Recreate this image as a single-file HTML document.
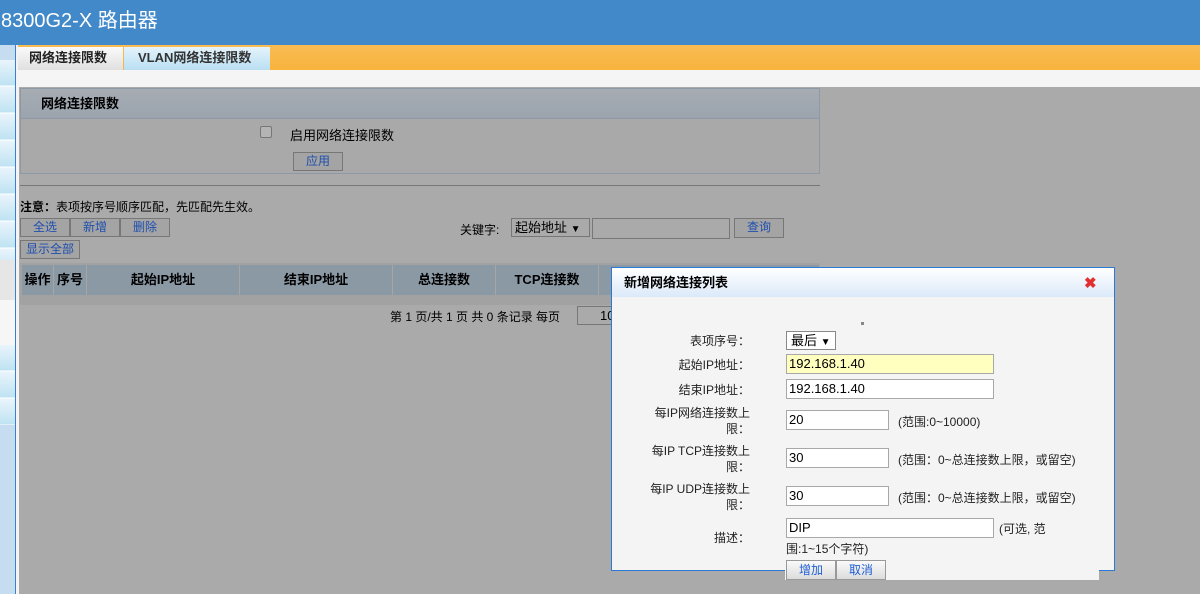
<!DOCTYPE html>
<html><head><meta charset="utf-8"><style>
*{margin:0;padding:0;box-sizing:border-box}
body{width:1200px;height:594px;position:relative;overflow:hidden;background:#aaa;font-family:"Liberation Sans","Noto Sans CJK SC",sans-serif;font-size:12px;color:#000}
.a{position:absolute}
.btn{position:absolute;border:1px solid #777;background:#a4a4a4;color:#1f4fae;text-align:center;line-height:17px;font-size:12px}
.dbtn{position:absolute;border:1px solid #999;background:linear-gradient(#fafafa,#dcdcdc);color:#1f5fd6;text-align:center;line-height:18px;font-size:12px}
.inp{position:absolute;border:1px solid #a8a8a8;background:#fff;height:20px;padding-left:2px;line-height:18px;font-size:13px}
.lb{position:absolute;right:450px;text-align:right;width:140px;line-height:16px;font-size:12px;color:#222}
.th{position:absolute;top:265px;height:30px;line-height:30px;text-align:center;font-weight:bold;font-size:13px;background:#8b99a5;border-right:1px solid #a6a6a6}
</style></head><body>
<div class="a" style="left:0;top:0;width:1200px;height:45px;background:#4289c9;color:#fff;font-size:20px;line-height:42px;padding-left:1px">8300G2-X 路由器</div>
<div class="a" style="left:0;top:45px;width:15px;height:549px;background:#c6dcf0"></div>
<div class="a" style="left:0;top:60px;width:15px;height:200px;background:repeating-linear-gradient(#e9f4fb 0,#bfe3f3 25px,#fff 26px,#e9f4fb 27px)"></div>
<div class="a" style="left:0;top:260px;width:15px;height:40px;background:#e6e6e6"></div>
<div class="a" style="left:0;top:300px;width:15px;height:45px;background:#f6f6f6"></div>
<div class="a" style="left:0;top:345px;width:15px;height:80px;background:repeating-linear-gradient(#e9f4fb 0,#bfe3f3 25px,#fff 26px,#e9f4fb 27px)"></div>
<div class="a" style="left:15px;top:45px;width:1px;height:549px;background:#3b7fd0"></div>
<div class="a" style="left:16px;top:45px;width:3px;height:549px;background:#f4f4f4"></div>
<div class="a" style="left:18px;top:45px;width:1182px;height:25px;background:linear-gradient(#f9bc53,#f8b33d)"></div>
<div class="a" style="left:18px;top:70px;width:1182px;height:17px;background:#f5f5f5"></div>
<div class="a" style="left:18px;top:47px;width:105px;height:23px;background:linear-gradient(#fafafa,#e0e0e0);font-weight:bold;font-size:13px;line-height:22px;padding-left:11px;color:#222">网络连接限数</div>
<div class="a" style="left:124px;top:47px;width:146px;height:23px;background:linear-gradient(#e4f3fb,#b9dff2);font-weight:bold;font-size:13px;line-height:22px;padding-left:14px;color:#333">VLAN网络连接限数</div>

<div class="a" style="left:20px;top:88px;width:800px;height:86px;border:1px solid #8d9aa6;background:#a9a9a9"></div>
<div class="a" style="left:21px;top:89px;width:798px;height:30px;background:linear-gradient(#a7acb3,#9ba4ae);border-bottom:1px solid #8d9aa6;font-weight:bold;font-size:13px;line-height:30px;padding-left:20px">网络连接限数</div>
<div class="a" style="left:260px;top:126px;width:12px;height:12px;border:1px solid #777;border-radius:2px;background:#b4b4b4"></div>
<div class="a" style="left:290px;top:125px;font-size:13px">启用网络连接限数</div>
<div class="btn" style="left:293px;top:152px;width:50px;height:19px">应用</div>
<div class="a" style="left:20px;top:185px;width:800px;height:1px;background:#777"></div>
<div class="a" style="left:20px;top:198px;font-size:12px"><b>注意：</b>表项按序号顺序匹配，先匹配先生效。</div>
<div class="btn" style="left:20px;top:218px;width:50px;height:19px">全选</div>
<div class="btn" style="left:70px;top:218px;width:50px;height:19px">新增</div>
<div class="btn" style="left:120px;top:218px;width:50px;height:19px">删除</div>
<div class="btn" style="left:20px;top:240px;width:60px;height:19px">显示全部</div>
<div class="a" style="left:460px;top:221px">关键字:</div>
<div class="a" style="left:511px;top:218px;width:79px;height:19px;border:1px solid #777;font-size:13px;line-height:17px;padding-left:3px">起始地址 <span style="font-size:10px">▼</span></div>
<div class="a" style="left:592px;top:218px;width:138px;height:21px;border:1px solid #777"></div>
<div class="btn" style="left:734px;top:218px;width:50px;height:20px">查询</div>
<div class="a" style="left:20px;top:263px;width:800px;height:42px;background:#a2a2a2"></div>
<div class="th" style="left:22px;width:32px">操作</div>
<div class="th" style="left:54px;width:33px">序号</div>
<div class="th" style="left:87px;width:153px">起始IP地址</div>
<div class="th" style="left:240px;width:153px">结束IP地址</div>
<div class="th" style="left:393px;width:103px">总连接数</div>
<div class="th" style="left:496px;width:103px">TCP连接数</div>
<div class="th" style="left:599px;width:221px"></div>
<div class="a" style="left:390px;top:308px;font-size:12px">第 1 页/共 1 页 共 0 条记录 每页</div>
<div class="a" style="left:577px;top:306px;width:40px;height:19px;border:1px solid #777;padding-left:22px;line-height:17px;font-size:13px">10</div>

<div class="a" style="left:611px;top:267px;width:504px;height:304px;border:1px solid #2a7ad6;background:#f4f4f4"></div>
<div class="a" style="left:612px;top:268px;width:502px;height:29px;background:linear-gradient(#fff,#dbe9f9);font-weight:bold;font-size:13px;line-height:29px;padding-left:12px">新增网络连接列表</div>
<div class="a" style="left:1084px;top:274px;color:#e23030;font-size:15px;font-weight:bold">✖</div>
<div class="a" style="left:861px;top:322px;width:3px;height:3px;background:#888"></div>
<div class="lb" style="top:333px">表项序号：</div>
<div class="a" style="left:786px;top:331px;width:50px;height:19px;border:1px solid #888;background:#fff;font-size:13px;line-height:17px;padding-left:4px">最后 <span style="font-size:10px">▼</span></div>
<div class="lb" style="top:357px">起始IP地址：</div>
<div class="inp" style="left:786px;top:354px;width:208px;background:#ffffc0">192.168.1.40</div>
<div class="lb" style="top:382px">结束IP地址：</div>
<div class="inp" style="left:786px;top:379px;width:208px">192.168.1.40</div>
<div class="lb" style="top:405px">每IP网络连接数上<br>限：</div>
<div class="inp" style="left:786px;top:410px;width:103px">20</div>
<div class="a" style="left:898px;top:413px;color:#222">(范围:0~10000)</div>
<div class="lb" style="top:443px">每IP TCP连接数上<br>限：</div>
<div class="inp" style="left:786px;top:448px;width:103px">30</div>
<div class="a" style="left:898px;top:451px;color:#222">(范围：0~总连接数上限，或留空)</div>
<div class="lb" style="top:481px">每IP UDP连接数上<br>限：</div>
<div class="inp" style="left:786px;top:486px;width:103px">30</div>
<div class="a" style="left:898px;top:489px;color:#222">(范围：0~总连接数上限，或留空)</div>
<div class="lb" style="top:530px">描述：</div>
<div class="inp" style="left:786px;top:518px;width:208px">DIP</div>
<div class="a" style="left:999px;top:520px;color:#222">(可选, 范</div>
<div class="a" style="left:786px;top:540px;color:#222">围:1~15个字符)</div>
<div class="a" style="left:785px;top:557px;width:314px;height:23px;background:#f4f4f4"></div>
<div class="dbtn" style="left:786px;top:560px;width:50px;height:20px">增加</div>
<div class="dbtn" style="left:836px;top:560px;width:50px;height:20px">取消</div>
</body></html>
